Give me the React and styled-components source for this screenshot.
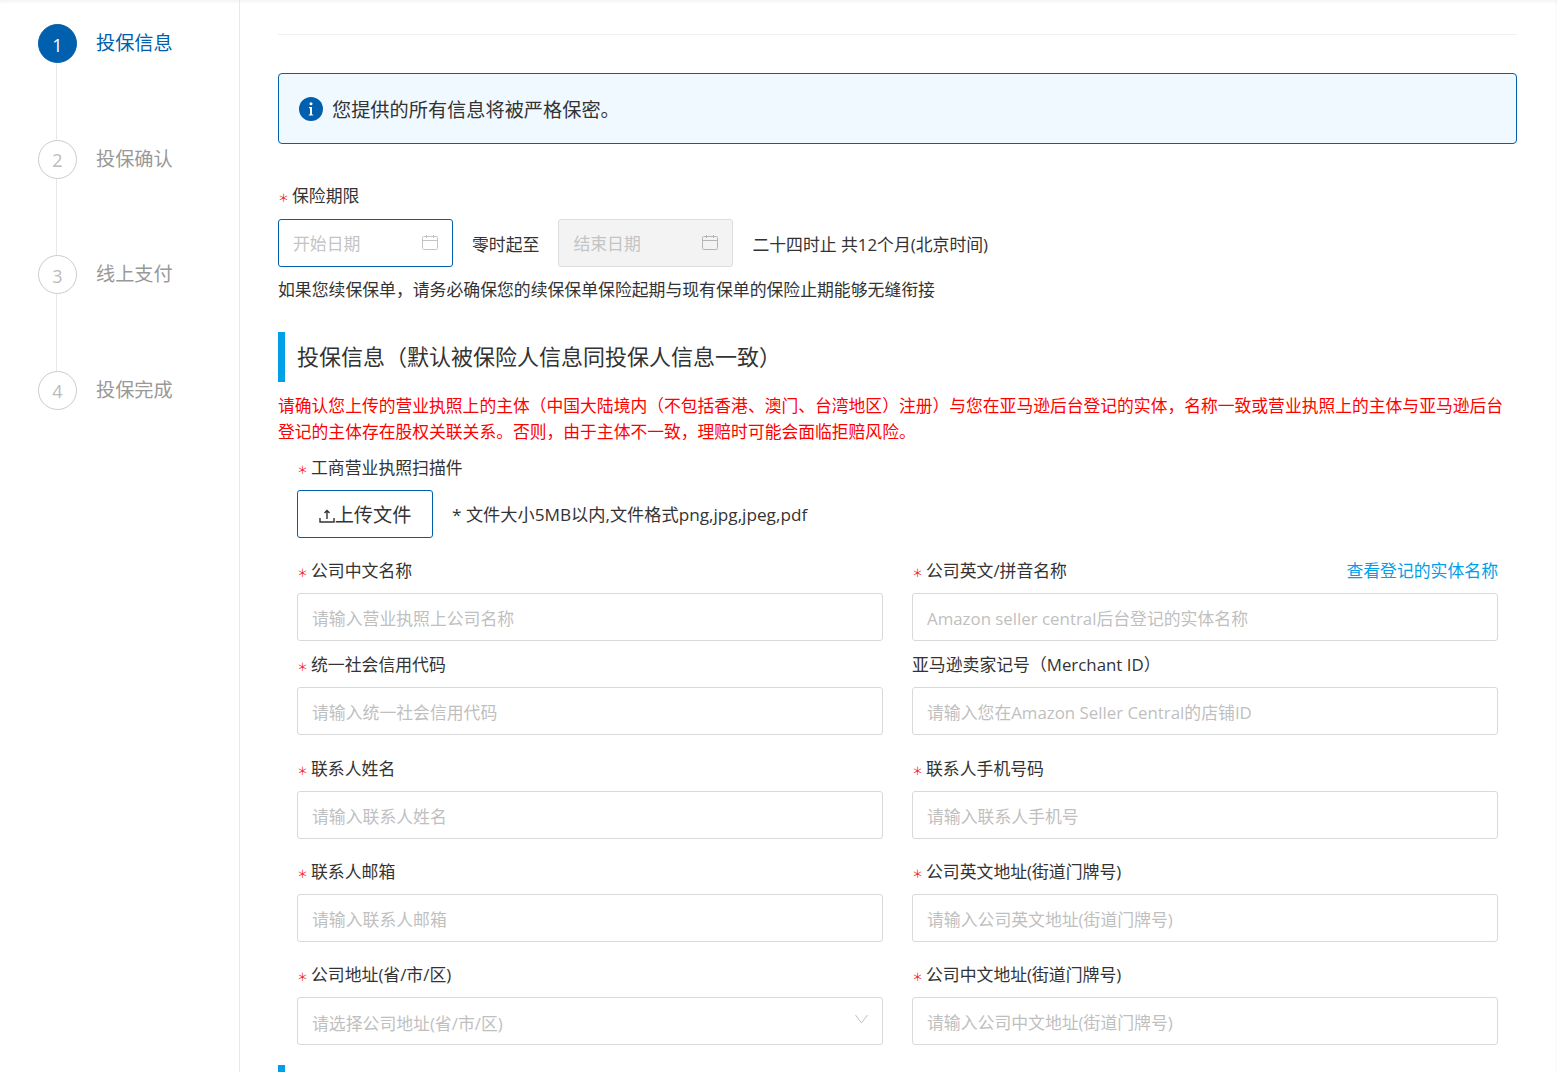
import React from 'react'
import styled, { createGlobalStyle } from 'styled-components'

const Global = createGlobalStyle`
  html, body { margin: 0; padding: 0; background: #fff; }
  * { box-sizing: border-box; }
  body {
    font-family: "Open Sans", "Noto Sans CJK SC", sans-serif;
    font-size: 16.85px;
    color: #333;
  }
`

const Page = styled.div`
  display: flex;
  height: 100vh;
  overflow: hidden;
  box-shadow: inset 0 4px 4px -3px rgba(0, 0, 0, 0.07), inset -2px 0 2px -1px rgba(0, 0, 0, 0.03);
`
const Side = styled.aside`
  width: 240px;
  flex: none;
  border-right: 1px solid #e8e8e8;
  padding: 24px 0 0 38px;
`
const Step = styled.div`
  display: flex;
  gap: 19px;
  height: ${p => (p.$last ? 39 : 115.5)}px;
  position: relative;
`
const StepLine = styled.div`
  position: absolute;
  left: 18px;
  top: 39px;
  bottom: 0;
  width: 1px;
  background: #e8e8e8;
`
const StepDot = styled.div`
  width: 39px;
  height: 39px;
  flex: none;
  border-radius: 50%;
  display: flex;
  align-items: center;
  justify-content: center;
  font-size: 18px;
  padding-top: 2px;
  background: ${p => (p.$active ? '#0060ae' : '#fff')};
  color: ${p => (p.$active ? '#fff' : '#bbb')};
  border: 1px solid ${p => (p.$active ? '#0060ae' : '#ccc')};
`
const StepName = styled.div`
  font-size: 19.2px;
  line-height: 37px;
  color: ${p => (p.$active ? '#0060ae' : '#999')};
`
const Main = styled.main`
  flex: 1;
  padding: 34px 40px 0 38px;
  min-width: 0;
`
const Rule = styled.div`
  height: 1px;
  background: #f0f0f0;
`
const Alert = styled.div`
  margin-top: 38px;
  height: 71px;
  display: flex;
  align-items: center;
  gap: 9px;
  padding-left: 20px;
  background: #f0f9ff;
  border: 1px solid #0060ae;
  border-radius: 4px;
  font-size: 19.2px;
`
const Star = styled.span`
  display: inline-block;
  width: 14px;
  color: #f5222d;
  font-size: 11px;
  line-height: 1;
  vertical-align: 0;
`
const Period = styled.div`
  margin-top: 37px;
  height: 29px;
  line-height: 29px;
  white-space: nowrap;
`
const DateRow = styled.div`
  margin-top: 9px;
  display: flex;
  align-items: center;
  gap: 19px;
`
const DateBox = styled.div`
  width: 175px;
  height: 48px;
  display: flex;
  align-items: center;
  justify-content: space-between;
  padding: 0 14px 2px;
  border-radius: 3px;
  border: 1px solid ${p => (p.$disabled ? '#ddd' : '#0060ae')};
  background: ${p => (p.$disabled ? '#f3f3f3' : '#fff')};
  color: #c4c4c4;
`
const Note = styled.div`
  margin-top: 8px;
  line-height: 29px;
`
const SectionTitle = styled.h2`
  margin: 28px 0 0;
  height: 50px;
  border-left: 7px solid #00a0e9;
  padding-left: 12px;
  font-size: 22px;
  font-weight: 400;
  line-height: 48px;
  white-space: nowrap;
`
const Warn = styled.p`
  margin: 11px 0 0;
  color: #f00;
  font-size: 16.8px;
  line-height: 26px;
`
const Form = styled.div`
  padding: 0 19px;
`
const Label = styled.div`
  height: 45px;
  padding-bottom: 3px;
  display: flex;
  align-items: center;
  justify-content: space-between;
  white-space: nowrap;
`
const UploadRow = styled.div`
  display: flex;
  align-items: center;
  gap: 19px;
`
const UploadBtn = styled.button`
  width: 136px;
  height: 48px;
  display: flex;
  align-items: center;
  justify-content: center;
  background: #fff;
  border: 1px solid #0060ae;
  border-radius: 3px;
  padding: 0;
  color: #333;
  font: inherit;
  font-size: 19.2px;
`
const UploadGlyph = styled.span`
  display: flex;
  margin-top: 3px;
`
const UploadNote = styled.span`
  font-size: 17.2px;
  padding-bottom: 2px;
`
const Grid = styled.div`
  margin-top: 10px;
  display: grid;
  grid-template-columns: 586px 586px;
  column-gap: 29px;
`
const Field = styled.div`
  margin-top: ${p => p.$gap || 0}px;
  min-width: 0;
`
const LinkText = styled.a`
  color: #00a0e9;
`
const TextInput = styled.input`
  display: block;
  width: 100%;
  height: 48px;
  padding: 2px 14px 0;
  border: 1px solid #d9d9d9;
  border-radius: 3px;
  background: #fff;
  font: inherit;
  color: #333;
  outline: none;
  &::placeholder { color: #bfbfbf; opacity: 1; }
`
const SelectBox = styled.div`
  height: 48px;
  display: flex;
  align-items: center;
  justify-content: space-between;
  padding: 2px 14px 0;
  border: 1px solid #d9d9d9;
  border-radius: 3px;
  color: #bfbfbf;
`
const ChevronWrap = styled.span`
  display: flex;
  margin-bottom: 6px;
`
const NextBar = styled.div`
  margin-top: 20px;
  height: 50px;
  width: 7px;
  background: #00a0e9;
`

const InfoIcon = () => (
  <svg width="24" height="24" viewBox="0 0 24 24">
    <circle cx="12" cy="12" r="12" fill="#0060ae" />
    <circle cx="12" cy="6.8" r="1.5" fill="#fff" />
    <path d="M10 10h3v7.4h1.2v1.2H9.8v-1.2H11v-6.2h-1z" fill="#fff" />
  </svg>
)

const CalendarIcon = ({ color }) => (
  <svg width="16" height="15" viewBox="0 0 16 15" fill="none" stroke={color} strokeWidth="1">
    <rect x="0.5" y="1.5" width="15" height="13" rx="1" />
    <path d="M0.5 5.5h15M4.5 0v3M11.5 0v3" />
  </svg>
)

const UploadIcon = () => (
  <svg width="16" height="14" viewBox="0 0 16 14" fill="none" stroke="#333" strokeWidth="1.4">
    <path d="M8 10V1.5M5.5 4 8 1.5 10.5 4M1 9v4h14V9" />
  </svg>
)

const ChevronIcon = () => (
  <svg width="13" height="10" viewBox="0 0 13 10" fill="none" stroke="#bfbfbf" strokeWidth="1">
    <path d="M.5 1 6.5 9l6-8" />
  </svg>
)

const steps = ['投保信息', '投保确认', '线上支付', '投保完成']

const fields = [
  { label: '公司中文名称', required: true, placeholder: '请输入营业执照上公司名称' },
  { label: '公司英文/拼音名称', required: true, placeholder: 'Amazon seller central后台登记的实体名称', link: '查看登记的实体名称' },
  { label: '统一社会信用代码', required: true, placeholder: '请输入统一社会信用代码', gap: 1 },
  { label: '亚马逊卖家记号（Merchant ID）', placeholder: '请输入您在Amazon Seller Central的店铺ID', gap: 1 },
  { label: '联系人姓名', required: true, placeholder: '请输入联系人姓名', gap: 11 },
  { label: '联系人手机号码', required: true, placeholder: '请输入联系人手机号', gap: 11 },
  { label: '联系人邮箱', required: true, placeholder: '请输入联系人邮箱', gap: 10 },
  { label: '公司英文地址(街道门牌号)', required: true, placeholder: '请输入公司英文地址(街道门牌号)', gap: 10 },
  { label: '公司地址(省/市/区)', required: true, placeholder: '请选择公司地址(省/市/区)', gap: 10, select: true },
  { label: '公司中文地址(街道门牌号)', required: true, placeholder: '请输入公司中文地址(街道门牌号)', gap: 10 },
]

const App = () => {
  return (
    <>
      <Global />
      <Page>
        <Side>
          {steps.map((name, i) => (
            <Step key={name} $last={i === steps.length - 1}>
              <StepDot $active={i === 0}>{i + 1}</StepDot>
              <StepName $active={i === 0}>{name}</StepName>
              {i < steps.length - 1 && <StepLine />}
            </Step>
          ))}
        </Side>

        <Main>
          <Rule />
          <Alert>
            <InfoIcon />
            您提供的所有信息将被严格保密。
          </Alert>

          <Period><Star>＊</Star>保险期限</Period>
          <DateRow>
            <DateBox><span>开始日期</span><CalendarIcon color="#c4c4c4" /></DateBox>
            <span>零时起至</span>
            <DateBox $disabled><span>结束日期</span><CalendarIcon color="#b5b5b5" /></DateBox>
            <span>二十四时止 共12个月(北京时间)</span>
          </DateRow>
          <Note>如果您续保保单，请务必确保您的续保保单保险起期与现有保单的保险止期能够无缝衔接</Note>

          <SectionTitle>投保信息（默认被保险人信息同投保人信息一致）</SectionTitle>
          <Warn>
            请确认您上传的营业执照上的主体（中国大陆境内（不包括香港、澳门、台湾地区）注册）与您在亚马逊后台登记的实体，名称一致或营业执照上的主体与亚马逊后台登记的主体存在股权关联关系。否则，由于主体不一致，理赔时可能会面临拒赔风险。
          </Warn>

          <Form>
            <Label>
              <span><Star>＊</Star>工商营业执照扫描件</span>
            </Label>
            <UploadRow>
              <UploadBtn><UploadGlyph><UploadIcon /></UploadGlyph>上传文件</UploadBtn>
              <UploadNote>* 文件大小5MB以内,文件格式png,jpg,jpeg,pdf</UploadNote>
            </UploadRow>

            <Grid>
              {fields.map(f => (
                <Field key={f.label} $gap={f.gap}>
                  <Label>
                    <span>{f.required && <Star>＊</Star>}{f.label}</span>
                    {f.link && <LinkText>{f.link}</LinkText>}
                  </Label>
                  {f.select
                    ? <SelectBox>{f.placeholder}<ChevronWrap><ChevronIcon /></ChevronWrap></SelectBox>
                    : <TextInput placeholder={f.placeholder} />}
                </Field>
              ))}
            </Grid>
          </Form>
          <NextBar />
        </Main>
      </Page>
    </>
  )
}

export default App
